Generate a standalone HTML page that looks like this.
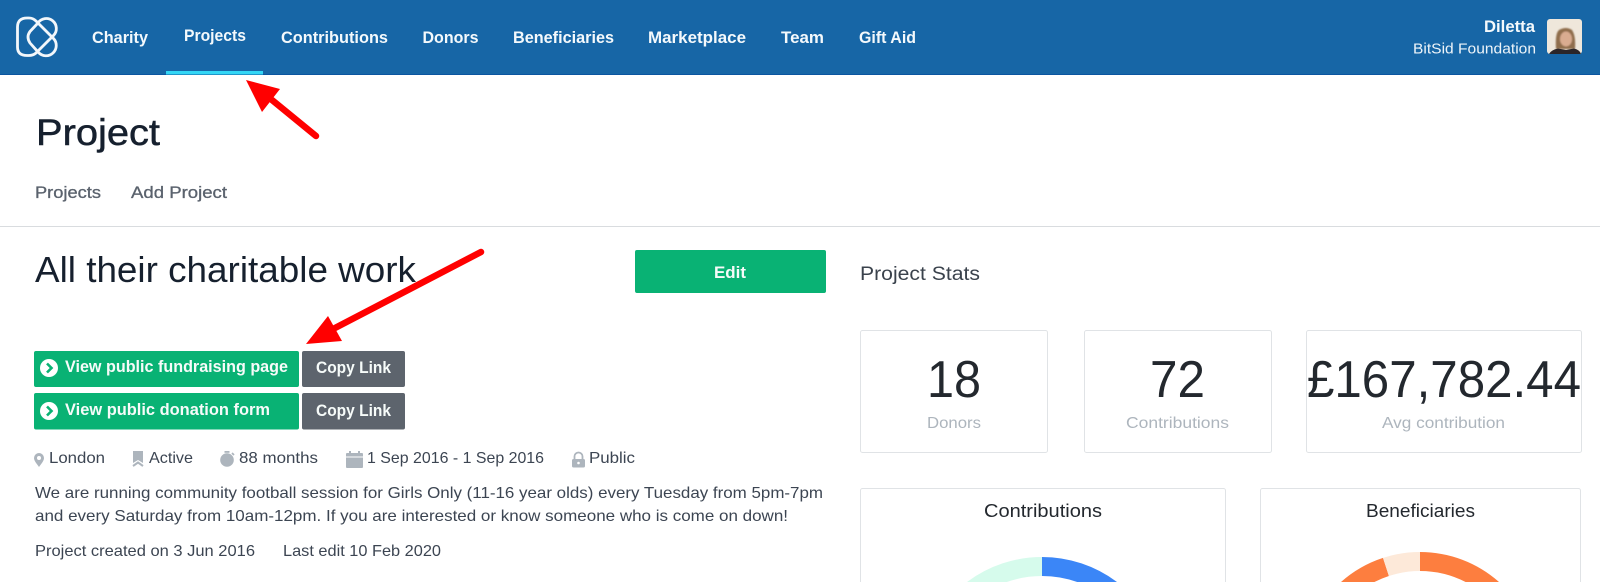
<!DOCTYPE html>
<html lang="en">
<head>
<meta charset="utf-8">
<title>Project</title>
<style>
html,body{margin:0;padding:0;width:1600px;height:582px;overflow:hidden;background:#fff}
svg{display:block}
text{font-family:"Liberation Sans",sans-serif;white-space:pre}
.nav{font-size:16.5px;font-weight:700;fill:#f4f9fc}
.body{font-size:16px;fill:#3c4552}
.sub{font-size:16.5px;fill:#5a626d;stroke:#5a626d;stroke-width:.3px}
.h{fill:#16202e}
.btn{font-size:16.5px;font-weight:700;fill:#f6fbf9}
.num{font-size:52px;fill:#23282e}
.lbl{font-size:16px;fill:#adb5bd}
.card{fill:#fff;stroke:#e0e3e6;stroke-width:1}
.ic{fill:#adb5bd}
</style>
</head>
<body>
<svg width="1600" height="582" viewBox="0 0 1600 582" xmlns="http://www.w3.org/2000/svg">
<defs><filter id="soft" x="-5%" y="-5%" width="110%" height="110%"><feGaussianBlur stdDeviation=".7"/></filter></defs>
<!-- Top navigation -->
<rect width="1600" height="74" fill="#1766a6"/>
<rect y="74" width="1600" height="1" fill="#0b55a0"/>
<rect x="166" y="71" width="97" height="3.500" fill="#33d6f5"/>
<path d="M17.500 27Q17.500 18 27 18H29Q33 18 36 21L53.500 38.500A10 10 0 1 1 38.500 52.500L30 43Q26 37 30 31.500L38 23A10 10 0 1 1 53.500 35.500L36 53Q33 55.500 29 55.500H27Q17.500 55.500 17.500 47Z" fill="none" stroke="#fff" stroke-width="2.800" stroke-linejoin="round" opacity=".95"/>
<text class="nav" x="92" y="43" textLength="56" lengthAdjust="spacingAndGlyphs">Charity</text>
<text class="nav" x="184" y="41" textLength="62" lengthAdjust="spacingAndGlyphs">Projects</text>
<text class="nav" x="281" y="43" textLength="107" lengthAdjust="spacingAndGlyphs">Contributions</text>
<text class="nav" x="422.500" y="43" textLength="56" lengthAdjust="spacingAndGlyphs">Donors</text>
<text class="nav" x="513" y="43" textLength="101" lengthAdjust="spacingAndGlyphs">Beneficiaries</text>
<text class="nav" x="648" y="43" textLength="98" lengthAdjust="spacingAndGlyphs">Marketplace</text>
<text class="nav" x="781" y="43" textLength="43" lengthAdjust="spacingAndGlyphs">Team</text>
<text class="nav" x="859" y="43" textLength="57" lengthAdjust="spacingAndGlyphs">Gift Aid</text>
<text class="nav" x="1484" y="32" textLength="51" lengthAdjust="spacingAndGlyphs">Diletta</text>
<text x="1413" y="53.500" textLength="123" lengthAdjust="spacingAndGlyphs" font-size="15" fill="#edf4f9">BitSid Foundation</text>
<!-- Avatar -->
<rect x="1547" y="19" width="35" height="35" rx="3" fill="#efe7db"/>
<g filter="url(#soft)">
<path d="M1556 49Q1555 33 1559 30Q1566 26 1572 30Q1576 36 1575 49Z" fill="#8f6d4c"/>
<ellipse cx="1566" cy="39" rx="6" ry="7.500" fill="#d9ac90"/>
</g>
<path d="M1549 54Q1551 50 1558 48.500L1566 50L1574 48.500Q1580 50 1581 54Z" fill="#2b2528"/>

<!-- Header -->
<text class="h" x="36" y="145" font-size="37" textLength="124" lengthAdjust="spacingAndGlyphs" stroke="#16202e" stroke-width=".5">Project</text>
<text class="sub" x="35" y="198" textLength="66" lengthAdjust="spacingAndGlyphs">Projects</text>
<text class="sub" x="131" y="198" textLength="96" lengthAdjust="spacingAndGlyphs">Add Project</text>
<rect y="226" width="1600" height="1" fill="#d9dcdf"/>

<!-- Left column -->
<text class="h" x="35" y="282" font-size="36" textLength="381" lengthAdjust="spacingAndGlyphs">All their charitable work</text>
<rect x="635" y="250" width="191" height="43" rx="2" fill="#09b274"/>
<text class="btn" x="714" y="278" textLength="32" lengthAdjust="spacingAndGlyphs">Edit</text>

<rect x="34" y="351" width="265" height="36" rx="2" fill="#09b274"/>
<circle cx="49" cy="368" r="9" fill="#fff"/>
<path d="M47 363.500L51.500 368L47 372.500" fill="none" stroke="#09b274" stroke-width="2.600"/>
<text class="btn" x="65" y="372" textLength="223" lengthAdjust="spacingAndGlyphs">View public fundraising page</text>
<rect x="302" y="351" width="103" height="36" rx="2" fill="#5d646d"/>
<text class="btn" x="316" y="373" textLength="75" lengthAdjust="spacingAndGlyphs">Copy Link</text>

<rect x="34" y="393" width="265" height="36.500" rx="2" fill="#09b274"/>
<circle cx="49" cy="411" r="9" fill="#fff"/>
<path d="M47 406.500L51.500 411L47 415.500" fill="none" stroke="#09b274" stroke-width="2.600"/>
<text class="btn" x="65" y="415" textLength="205" lengthAdjust="spacingAndGlyphs">View public donation form</text>
<rect x="302" y="393" width="103" height="36.500" rx="2" fill="#5d646d"/>
<text class="btn" x="316" y="416" textLength="75" lengthAdjust="spacingAndGlyphs">Copy Link</text>

<!-- Meta row -->
<path class="ic" fill-rule="evenodd" d="M39 453a5 5 0 0 1 5 5c0 3-3 6-5 9c-2-3-5-6-5-9a5 5 0 0 1 5-5zm0 3a2 2 0 1 0 0 4a2 2 0 0 0 0-4z"/>
<text class="body" x="49" y="463" textLength="56" lengthAdjust="spacingAndGlyphs">London</text>
<path class="ic" d="M133 451H143V463L138 460L133 463Z"/>
<path d="M133 466L138 462.500L143 466" fill="none" stroke="#adb5bd" stroke-width="2"/>
<text class="body" x="149" y="463" textLength="44" lengthAdjust="spacingAndGlyphs">Active</text>
<circle class="ic" cx="227" cy="460" r="6.800"/>
<rect class="ic" x="224.500" y="451" width="5" height="1.800"/>
<path d="M232 453L234 455" stroke="#adb5bd" stroke-width="1.800"/>
<text class="body" x="239" y="463" textLength="79" lengthAdjust="spacingAndGlyphs">88 months</text>
<rect class="ic" x="346" y="453" width="17" height="15" rx="1"/>
<rect x="346" y="456.500" width="17" height="1" fill="#fff"/>
<rect class="ic" x="349" y="451" width="2" height="4"/>
<rect class="ic" x="358" y="451" width="2" height="4"/>
<text class="body" x="367" y="463" textLength="177" lengthAdjust="spacingAndGlyphs">1 Sep 2016 - 1 Sep 2016</text>
<path d="M574.500 459V456.500a4 4 0 0 1 8 0V459" fill="none" stroke="#adb5bd" stroke-width="1.800"/>
<rect class="ic" x="572" y="459" width="13" height="8.500" rx="1.500"/>
<circle cx="578.500" cy="463" r="1.300" fill="#fff"/>
<text class="body" x="589" y="463" textLength="46" lengthAdjust="spacingAndGlyphs">Public</text>

<!-- Description -->
<text class="body" x="35" y="498" textLength="788" lengthAdjust="spacingAndGlyphs">We are running community football session for Girls Only (11-16 year olds) every Tuesday from 5pm-7pm</text>
<text class="body" x="35" y="521" textLength="753" lengthAdjust="spacingAndGlyphs">and every Saturday from 10am-12pm. If you are interested or know someone who is come on down!</text>
<text class="body" x="35" y="556" textLength="220" lengthAdjust="spacingAndGlyphs">Project created on 3 Jun 2016</text>
<text class="body" x="283" y="556" textLength="158" lengthAdjust="spacingAndGlyphs">Last edit 10 Feb 2020</text>

<!-- Stats -->
<text x="860" y="280" font-size="19" fill="#3a424c" textLength="120" lengthAdjust="spacingAndGlyphs">Project Stats</text>

<rect class="card" x="860.500" y="330.500" width="187" height="122" rx="2"/>
<rect class="card" x="1084.500" y="330.500" width="187" height="122" rx="2"/>
<rect class="card" x="1306.500" y="330.500" width="275" height="122" rx="2"/>
<text class="num" x="927" y="397" textLength="54" lengthAdjust="spacingAndGlyphs">18</text>
<text class="num" x="1150" y="397" textLength="55" lengthAdjust="spacingAndGlyphs">72</text>
<text class="num" x="1307" y="397" textLength="274" lengthAdjust="spacingAndGlyphs">£167,782.44</text>
<text class="lbl" x="927" y="428" textLength="54" lengthAdjust="spacingAndGlyphs">Donors</text>
<text class="lbl" x="1126" y="428" textLength="103" lengthAdjust="spacingAndGlyphs">Contributions</text>
<text class="lbl" x="1382" y="428" textLength="123" lengthAdjust="spacingAndGlyphs">Avg contribution</text>

<!-- Chart cards (cut by the frame bottom) -->
<path d="M860.500 582V490.500a2 2 0 0 1 2-2H1223.500a2 2 0 0 1 2 2V582" fill="none" stroke="#e0e3e6"/>
<path d="M1260.500 582V490.500a2 2 0 0 1 2-2H1578.500a2 2 0 0 1 2 2V582" fill="none" stroke="#e0e3e6"/>
<text x="984" y="517" font-size="18.500" fill="#23282e" textLength="118" lengthAdjust="spacingAndGlyphs">Contributions</text>
<text x="1366" y="517" font-size="18.500" fill="#23282e" textLength="109" lengthAdjust="spacingAndGlyphs">Beneficiaries</text>

<!-- Donuts -->
<path d="M1042 557A125 125 0 0 1 1117 582H1077.200A106 106 0 0 0 1042 576Z" fill="#3b86f7"/>
<path d="M1042 557A125 125 0 0 0 967 582H1006.800A106 106 0 0 1 1042 576Z" fill="#d6fbec"/>
<path d="M1420 552A119 119 0 0 1 1499 582H1465.600A100 100 0 0 0 1420 571Z" fill="#fd7e3f"/>
<path d="M1341 582A119 119 0 0 1 1383 557.900L1388.900 576A100 100 0 0 0 1374.400 582Z" fill="#fd7e3f"/>
<path d="M1383 557.900A119 119 0 0 1 1420 552V571A100 100 0 0 0 1388.900 576Z" fill="#fde9d9"/>

<!-- Annotation arrows -->
<path d="M316 136L272 100" stroke="#f00" stroke-width="6.500" stroke-linecap="round"/>
<path d="M246 80L280 89L262 112Z" fill="#f00"/>
<path d="M481 252L335 328" stroke="#f00" stroke-width="6.500" stroke-linecap="round"/>
<path d="M306 344L328 316L342 341Z" fill="#f00"/>
</svg>
</body>
</html>
